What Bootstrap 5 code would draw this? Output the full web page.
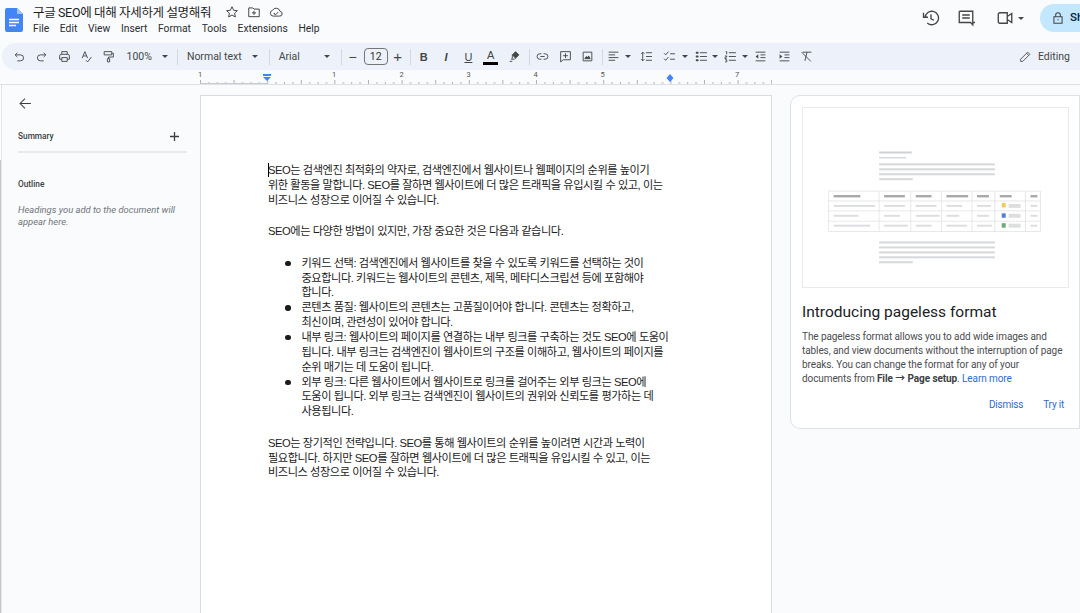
<!DOCTYPE html>
<html lang="ko"><head><meta charset="utf-8"><title>구글 SEO에 대해 자세하게 설명해줘</title>
<link href="https://cdn.jsdelivr.net/npm/bootstrap@5.3.0/dist/css/bootstrap.min.css" rel="stylesheet">
<style>
html,body{height:613px;overflow:hidden;background:#f9fbfd;font-family:Roboto,"Noto Sans CJK KR",sans-serif;color:#444746}
.ic{width:15px;height:15px;fill:none;stroke:#444746;stroke-width:2;flex:none}
.top-bar{height:43px;padding-left:5px}
.doc-title{font-size:12.5px;letter-spacing:-.35px;line-height:16px;color:#1f1f1f;margin-left:10px;margin-top:3px;width:177px;white-space:nowrap}
.title-row{height:22px;padding-top:1px}
.title-ic{margin-left:8px;width:14px;height:14px;stroke-width:1.7}
.title-ic:first-of-type{margin-left:15px}
.menu-row{margin-left:10px;font-size:10.3px;line-height:14px;color:#2b2d2f;gap:10.7px}
.top-right{margin-left:auto;height:36px}
.top-right .ic{width:18px;height:18px;stroke-width:1.8}
.gap-c{margin-left:17px}
.gap-v{margin-left:21px}
.share-pill{width:70px;height:28px;margin-right:-30px;background:#c2e7ff;border-radius:14px 0 0 14px;padding-left:11px;font-size:11.5px;font-weight:500;color:#001d35;gap:5px;white-space:nowrap;overflow:hidden}
.top-right .share-pill .ic{width:14px;height:14px}
.tool-strip{height:27px;margin-left:2px;background:#edf2fa;border-radius:14px 0 0 14px;padding-left:6.5px;font-size:10.5px;color:#444746;white-space:nowrap}
.cell{width:22.3px;height:27px;flex:none}
.cell .ic{width:13px;height:13px;stroke-width:1.7}
.drop{width:0;height:0;border-left:3px solid transparent;border-right:3px solid transparent;border-top:3px solid #444746;flex:none}
.vsep{width:1px;height:16px;background:#d3d8e0;flex:none}
.size-box{width:24px;height:17px;border:1px solid #747775;border-radius:4px;font-size:10.5px;line-height:15px;text-align:center;flex:none;color:#333}
.glyph{font-family:"Liberation Sans",sans-serif;font-size:11px;line-height:14px;color:#444746}
.ruler-wrap{height:14px}
.ruler-wrap svg{display:block}
.work-area{height:529px;border-top:1px solid #dde0e4}
.side-rail{width:2px;flex:none;background:linear-gradient(#fff 0,#fff 75px,#c6c8cb 75px);border-right:1px solid #e3e5e8}
.outline-pane{width:198px;flex:none;padding:0 0 0 16px}
.back-btn{height:38px;padding-left:0}
.back-btn svg{margin-left:1px;margin-top:12px;width:13px;height:13px;stroke:#3c4043;stroke-width:1.9;fill:none}
.outline-head{font-size:8.3px;font-weight:500;line-height:12px;color:#3c4043}
.summary-row{width:169px;height:12px;padding-bottom:9px;margin-top:7px;border-bottom:2px solid #e8eaed;box-sizing:content-box}
.outline-title{margin-top:25px}
.outline-hint{font-size:9.4px;line-height:11.5px;font-style:italic;color:#70757a;margin-top:14px;width:170px}
.doc-page{width:572px;flex:none;margin-top:10px;background:#fff;border:1px solid #dadce0;border-bottom:0;padding:67px 0 0 67px;font-family:"Liberation Sans","Noto Sans CJK KR",sans-serif;font-size:11.2px;letter-spacing:-.44px;line-height:14.85px;color:#1b1b1b;white-space:nowrap;height:519px;position:relative}
.doc-page p{margin:0 0 16.7px}
.doc-page ul{margin:0 0 16.7px;padding-left:33.5px;list-style:none}
.doc-page li{position:relative}
.doc-page li::before{content:"";position:absolute;left:-16.5px;top:5px;width:5.5px;height:5.5px;border-radius:50%;background:#1b1b1b}
.caret-bar{position:absolute;left:67px;top:67px;width:1px;height:14px;background:#000}
.tip-card{width:290px;height:334px;flex:none;margin:10px 0 0 18px;background:#fff;border:1px solid #dfe1e4;border-radius:10px 0 0 10px;padding:11px 11px 0 11px}
.tip-art{display:block;width:267px;height:181px;border:1px solid #e8eaed}
.tip-title{font-size:15.5px;line-height:20px;color:#202124;margin:14px 0 0;font-weight:400;white-space:nowrap}
.tip-text{font-size:10px;letter-spacing:-.09px;line-height:14px;color:#4b4d50;margin:8px -12px 0 0;white-space:nowrap}
.tip-text b{color:#3c4043;font-weight:700}
.tip-text a,.tip-act{color:#2d6cd2;text-decoration:none}
.tip-actions{gap:20px;margin-top:12px;padding-right:4px}
.tip-act{font-size:10px;letter-spacing:-.2px;line-height:14px;padding:0;border:0}
</style></head><body>
<svg width="0" height="0" class="d-block position-absolute"><defs>
<symbol id="i-undo" viewBox="0 0 24 24"><path d="M8 5 4 9l4 4M4 9h10a5 5 0 0 1 0 11H8"/></symbol>
<symbol id="i-redo" viewBox="0 0 24 24"><path d="m16 5 4 4-4 4M20 9H10a5 5 0 0 0 0 11h6"/></symbol>
<symbol id="i-print" viewBox="0 0 24 24"><path d="M7 8V3h10v5M7 17H3v-6a3 3 0 0 1 3-3h12a3 3 0 0 1 3 3v6h-4M7 14h10v7H7z"/></symbol>
<symbol id="i-spell" viewBox="0 0 24 24"><path d="m4 15 5-12 5 12M6 11h6M11 19l3 3 7-9"/></symbol>
<symbol id="i-paint" viewBox="0 0 24 24"><path d="M4 3h14v6H4zM18 6h3v7h-9v3M10 16h4v6h-4z"/></symbol>
<symbol id="i-high" viewBox="0 0 24 24"><path d="m14 3 6 6-6 6-6-6z" fill="#444746"/><path d="M8 9v6l-2 2h6l2-2M3 21h5"/></symbol>
<symbol id="i-link" viewBox="0 0 24 24"><path d="M10 7H7a5 5 0 0 0 0 10h3M14 7h3a5 5 0 0 1 0 10h-3M8 12h8"/></symbol>
<symbol id="i-addc" viewBox="0 0 24 24"><path d="M3 3h18v15H8l-5 4zM12 6v9M7.500 10.500h9"/></symbol>
<symbol id="i-img" viewBox="0 0 24 24"><path d="M4 4h16v16H4z"/><path d="m7 16 3-4 2 2 2-3 3 5z" fill="#444746"/></symbol>
<symbol id="i-align" viewBox="0 0 24 24"><path d="M3 4h18M3 9h12M3 14h18M3 19h12"/></symbol>
<symbol id="i-space" viewBox="0 0 24 24"><path d="M11 5h11M11 12h11M11 19h11M5 4v16M2 7l3-3 3 3M2 17l3 3 3-3"/></symbol>
<symbol id="i-check" viewBox="0 0 24 24"><path d="m2 6 3 3 5-6M2 16l3 3 5-6M13 7h9M13 17h9"/></symbol>
<symbol id="i-bul" viewBox="0 0 24 24"><path d="M9 5h13M9 12h13M9 19h13"/><path d="M3 5h2M3 12h2M3 19h2" stroke-width="3.400" stroke-linecap="round"/></symbol>
<symbol id="i-num" viewBox="0 0 24 24"><path d="M9 5h13M9 12h13M9 19h13M3 3h2v5M2 11h3v2H2v3h3M2 18h3v4H2"/></symbol>
<symbol id="i-out" viewBox="0 0 24 24"><path d="M3 4h18M12 9h9M12 14h9M3 20h18"/><path d="M8 8v8l-5-4z" fill="#444746" stroke="none"/></symbol>
<symbol id="i-in" viewBox="0 0 24 24"><path d="M3 4h18M12 9h9M12 14h9M3 20h18"/><path d="M3 8v8l5-4z" fill="#444746" stroke="none"/></symbol>
<symbol id="i-clear" viewBox="0 0 24 24"><path d="M5 4h16M13 4l-4 16M3 4l17 17"/></symbol>
<symbol id="i-pen" viewBox="0 0 24 24"><path d="M3 21v-4L16 4l4 4L7 21zM14 6l4 4"/></symbol>
<symbol id="i-star" viewBox="0 0 24 24"><path d="m12 3 2.800 6 6.400.7-4.800 4.300 1.400 6.500L12 17.200 6.200 20.500 7.600 14 2.800 9.700 9.200 9z"/></symbol>
<symbol id="i-fold" viewBox="0 0 24 24"><path d="M3 5h7l2 2h9v13H3zM12 10v7M8.500 13.500h7"/></symbol>
<symbol id="i-cloud" viewBox="0 0 24 24"><path d="M7 19a5 5 0 0 1-1-9.800 7 7 0 0 1 13 1.800 4 4 0 0 1-1 8zM8 14l3 3"/><path d="m9 14 2.500 2.500L16 12"/></symbol>
</defs></svg>

<header class="top-bar d-flex align-items-start">
  <svg width="18" height="24" viewBox="0 0 18 24" class="flex-none mt-2"><path d="M2 0h10l6 6v16a2 2 0 0 1-2 2H2a2 2 0 0 1-2-2V2a2 2 0 0 1 2-2z" fill="#4285f4"/><path d="M12 0l6 6h-6z" fill="#a1c2fa"/><path d="M4 11.500h10M4 14.500h10M4 17.500h7" stroke="#fff" stroke-width="1.300"/></svg>
  <div class="d-flex flex-column">
    <div class="title-row d-flex align-items-center">
      <div class="doc-title">구글 SEO에 대해 자세하게 설명해줘</div>
      <svg class="ic title-ic"><use href="#i-star"/></svg>
      <svg class="ic title-ic"><use href="#i-fold"/></svg>
      <svg class="ic title-ic"><use href="#i-cloud"/></svg>
    </div>
    <nav class="menu-row d-flex"><span>File</span><span>Edit</span><span>View</span><span>Insert</span><span>Format</span><span>Tools</span><span>Extensions</span><span>Help</span></nav>
  </div>
  <div class="top-right d-flex align-items-center">
    <svg class="ic" viewBox="0 0 24 24"><path d="M4 12a9 9 0 1 1 3 6.700M2 5v6h6M12 7v6l4 2"/></svg>
    <svg class="ic gap-c" viewBox="0 0 24 24"><path d="M3 3h18v15h3M3 3v15h15l3 3V18M7 8h10M7 12h10"/></svg>
    <svg class="ic gap-v" viewBox="0 0 24 24"><path d="M3 7a2 2 0 0 1 2-2h10v14H5a2 2 0 0 1-2-2zM15 10l6-4v12l-6-4"/></svg>
    <span class="drop ms-1 me-3"></span>
    <div class="share-pill d-flex align-items-center"><svg class="ic" viewBox="0 0 24 24"><path d="M5 10h14v11H5zM8 10V7a4 4 0 0 1 8 0v3M11 15h2"/></svg>Share</div>
  </div>
</header>

<div class="tool-strip d-flex align-items-center">
  <span class="cell d-flex align-items-center justify-content-center"><svg class="ic"><use href="#i-undo"/></svg></span>
  <span class="cell d-flex align-items-center justify-content-center"><svg class="ic"><use href="#i-redo"/></svg></span>
  <span class="cell d-flex align-items-center justify-content-center"><svg class="ic"><use href="#i-print"/></svg></span>
  <span class="cell d-flex align-items-center justify-content-center"><svg class="ic"><use href="#i-spell"/></svg></span>
  <span class="cell d-flex align-items-center justify-content-center"><svg class="ic"><use href="#i-paint"/></svg></span>
  <span style="margin-left:6.5px">100%</span><span class="drop" style="margin-left:10px"></span><span class="vsep" style="margin-left:9px"></span>
  <span style="margin-left:9px">Normal text</span><span class="drop" style="margin-left:10px"></span><span class="vsep" style="margin-left:11px"></span>
  <span style="margin-left:9px;width:45px">Arial</span><span class="drop"></span><span class="vsep" style="margin-left:11px"></span>
  <span class="glyph text-center" style="width:22px;font-size:14px">−</span>
  <span class="size-box">12</span>
  <span class="glyph text-center" style="width:20px;font-size:15px">+</span><span class="vsep" style="margin-left:2px"></span>
  <span class="cell d-flex align-items-center justify-content-center glyph fw-bold" style="margin-left:2px">B</span>
  <span class="cell d-flex align-items-center justify-content-center glyph fst-italic fw-bold">I</span>
  <span class="cell d-flex align-items-center justify-content-center glyph text-decoration-underline">U</span>
  <span class="cell d-flex flex-column align-items-center justify-content-center glyph"><span>A</span><span class="d-block bg-black" style="width:15px;height:2.500px"></span></span>
  <span class="cell d-flex align-items-center justify-content-center" style="margin-left:1.500px"><svg class="ic"><use href="#i-high"/></svg></span>
  <span class="vsep" style="margin-left:3px"></span>
  <span class="cell d-flex align-items-center justify-content-center" style="margin-left:2px"><svg class="ic"><use href="#i-link"/></svg></span>
  <span class="cell d-flex align-items-center justify-content-center"><svg class="ic"><use href="#i-addc"/></svg></span>
  <span class="cell d-flex align-items-center justify-content-center"><svg class="ic"><use href="#i-img"/></svg></span>
  <span class="vsep" style="margin-left:3px"></span>
  <span class="d-flex align-items-center justify-content-center" style="width:22px"><svg class="ic" style="width:13px;height:13px;stroke-width:1.700"><use href="#i-align"/></svg></span><span class="drop"></span>
  <span class="cell d-flex align-items-center justify-content-center" style="margin-left:5px"><svg class="ic"><use href="#i-space"/></svg></span>
  <span class="cell d-flex align-items-center justify-content-center" style="margin-left:1px"><svg class="ic"><use href="#i-check"/></svg></span><span class="drop" style="margin-left:1px"></span>
  <span class="cell d-flex align-items-center justify-content-center" style="margin-left:2px"><svg class="ic"><use href="#i-bul"/></svg></span><span class="drop"></span>
  <span class="cell d-flex align-items-center justify-content-center" style="margin-left:1px"><svg class="ic"><use href="#i-num"/></svg></span><span class="drop"></span>
  <span class="cell d-flex align-items-center justify-content-center" style="margin-left:2px"><svg class="ic"><use href="#i-out"/></svg></span>
  <span class="cell d-flex align-items-center justify-content-center" style="margin-left:1.500px"><svg class="ic"><use href="#i-in"/></svg></span>
  <span class="cell d-flex align-items-center justify-content-center"><svg class="ic"><use href="#i-clear"/></svg></span>
  <span class="ms-auto d-flex align-items-center" style="gap:6px;margin-right:10px"><svg class="ic" style="width:13px;height:13px;stroke-width:1.600"><use href="#i-pen"/></svg>Editing</span>
</div>

<div class="ruler-wrap">
<svg width="1080" height="14" viewBox="0 0 1080 14">
  <defs><pattern id="rtick" x="200" y="0" width="67.200" height="14" patternUnits="userSpaceOnUse">
    <path d="M.5 10v4M8.900 12v2M17.300 12v2M25.700 12v2M34.100 10v4M42.500 12v2M50.900 12v2M59.300 12v2" stroke="#9aa0a6" stroke-width=".8"/>
  </pattern></defs>
  <rect x="200" y="0" width="572" height="14" fill="url(#rtick)"/>
  <path d="M200 13.500h68" stroke="#c8cbd0" stroke-width="1"/>
  <g font-family="Roboto,sans-serif" font-size="7.500" fill="#555" text-anchor="middle">
    <text x="200" y="7">1</text><text x="334" y="7">1</text><text x="401.500" y="7">2</text><text x="468.500" y="7">3</text><text x="535.500" y="7">4</text><text x="602.500" y="7">5</text><text x="737" y="7">7</text>
  </g>
  <path d="M263 4h8v2h-8z" fill="#4285f4"/><path d="M263 7h8l-4 4z" fill="#4285f4"/>
  <path d="m670 4 3.500 4-3.500 4-3.500-4z" fill="#4285f4"/>
</svg>
</div>

<div class="work-area d-flex">
  <div class="side-rail"></div>
  <aside class="outline-pane">
    <div class="back-btn"><svg viewBox="0 0 24 24"><path d="M22 12H3M11 3l-9 9 9 9"/></svg></div>
    <div class="summary-row outline-head d-flex justify-content-between align-items-center"><span>Summary</span><svg width="9" height="9" viewBox="0 0 9 9" class="me-2"><path d="M4.500 0v9M0 4.500h9" stroke="#3c4043" stroke-width="1.300"/></svg></div>
    <div class="outline-head outline-title">Outline</div>
    <div class="outline-hint">Headings you add to the document will appear here.</div>
  </aside>
  <main class="doc-page">
    <span class="caret-bar"></span>
    <p>SEO는 검색엔진 최적화의 약자로, 검색엔진에서 웹사이트나 웹페이지의 순위를 높이기<br>위한 활동을 말합니다. SEO를 잘하면 웹사이트에 더 많은 트래픽을 유입시킬 수 있고, 이는<br>비즈니스 성장으로 이어질 수 있습니다.</p>
    <p>SEO에는 다양한 방법이 있지만, 가장 중요한 것은 다음과 같습니다.</p>
    <ul>
      <li>키워드 선택: 검색엔진에서 웹사이트를 찾을 수 있도록 키워드를 선택하는 것이<br>중요합니다. 키워드는 웹사이트의 콘텐츠, 제목, 메타디스크립션 등에 포함해야<br>합니다.</li>
      <li>콘텐츠 품질: 웹사이트의 콘텐츠는 고품질이어야 합니다. 콘텐츠는 정확하고,<br>최신이며, 관련성이 있어야 합니다.</li>
      <li>내부 링크: 웹사이트의 페이지를 연결하는 내부 링크를 구축하는 것도 SEO에 도움이<br>됩니다. 내부 링크는 검색엔진이 웹사이트의 구조를 이해하고, 웹사이트의 페이지를<br>순위 매기는 데 도움이 됩니다.</li>
      <li>외부 링크: 다른 웹사이트에서 웹사이트로 링크를 걸어주는 외부 링크는 SEO에<br>도움이 됩니다. 외부 링크는 검색엔진이 웹사이트의 권위와 신뢰도를 평가하는 데<br>사용됩니다.</li>
    </ul>
    <p>SEO는 장기적인 전략입니다. SEO를 통해 웹사이트의 순위를 높이려면 시간과 노력이<br>필요합니다. 하지만 SEO를 잘하면 웹사이트에 더 많은 트래픽을 유입시킬 수 있고, 이는<br>비즈니스 성장으로 이어질 수 있습니다.</p>
  </main>
  <section class="tip-card card">
    <svg class="tip-art" viewBox="0 0 268 181">
      <g fill="#d5d7da">
        <rect x="77" y="44" width="33" height="2" fill="#cfd1d4"/><rect x="77" y="49.500" width="27" height="1.500"/>
        <rect x="77" y="56" width="117" height="2"/><rect x="77" y="61" width="117" height="2"/><rect x="77" y="66" width="117" height="2"/><rect x="77" y="71" width="34" height="2"/>
        <rect x="77" y="135" width="117" height="2"/><rect x="77" y="140" width="117" height="2"/><rect x="77" y="145" width="117" height="2"/><rect x="77" y="150" width="117" height="2"/><rect x="77" y="155" width="34" height="2"/>
      </g>
      <g stroke="#dcdee1" stroke-width=".7" fill="none">
        <rect x="26" y="84" width="214" height="41"/>
        <path d="M26 94h214M26 104h214M26 114.500h214M77 84v41M109 84v41M140 84v41M171 84v41M194 84v41M225 84v41"/>
      </g>
      <g fill="#a6a8ab">
        <rect x="31" y="88" width="27" height="2.400"/><rect x="82" y="88" width="21" height="2.400"/><rect x="114" y="88" width="16" height="2.400"/><rect x="145" y="88" width="22" height="2.400"/><rect x="176" y="88" width="12" height="2.400"/><rect x="199" y="88" width="12" height="2.400"/><rect x="230" y="88" width="7" height="2.400"/>
      </g>
      <g fill="#dcdee0">
        <rect x="31" y="98" width="42" height="2"/><rect x="82" y="98" width="21" height="2"/><rect x="114" y="98" width="21" height="2"/><rect x="145" y="98" width="16" height="2"/><rect x="176" y="98" width="14" height="2"/><rect x="208" y="97" width="12" height="4"/><rect x="230" y="98" width="7" height="2"/>
        <rect x="31" y="108" width="25" height="2"/><rect x="82" y="108" width="16" height="2"/><rect x="114" y="108" width="24" height="2"/><rect x="145" y="108" width="13" height="2"/><rect x="176" y="108" width="12" height="2"/><rect x="208" y="107" width="12" height="4"/><rect x="230" y="108" width="7" height="2"/>
        <rect x="31" y="118" width="37" height="2"/><rect x="82" y="118" width="24" height="2"/><rect x="114" y="118" width="16" height="2"/><rect x="145" y="118" width="21" height="2"/><rect x="176" y="118" width="15" height="2"/><rect x="208" y="117" width="12" height="4"/><rect x="230" y="118" width="7" height="2"/>
      </g>
      <rect x="201" y="96" width="4" height="4.500" fill="#f4c95d"/><rect x="201" y="106.500" width="4" height="4.500" fill="#4f7fe0"/><rect x="201" y="116.500" width="4" height="4.500" fill="#6aab78"/>
    </svg>
    <h2 class="tip-title">Introducing pageless format</h2>
    <p class="tip-text">The pageless format allows you to add wide images and<br>tables, and view documents without the interruption of page<br>breaks. You can change the format for any of your<br>documents from <b>File → Page setup</b>. <a href="#">Learn more</a></p>
    <div class="tip-actions d-flex justify-content-end">
      <button class="btn tip-act">Dismiss</button><button class="btn tip-act">Try it</button>
    </div>
  </section>
</div>
<script src="https://cdn.jsdelivr.net/npm/bootstrap@5.3.0/dist/js/bootstrap.bundle.min.js"></script>
</body></html>
